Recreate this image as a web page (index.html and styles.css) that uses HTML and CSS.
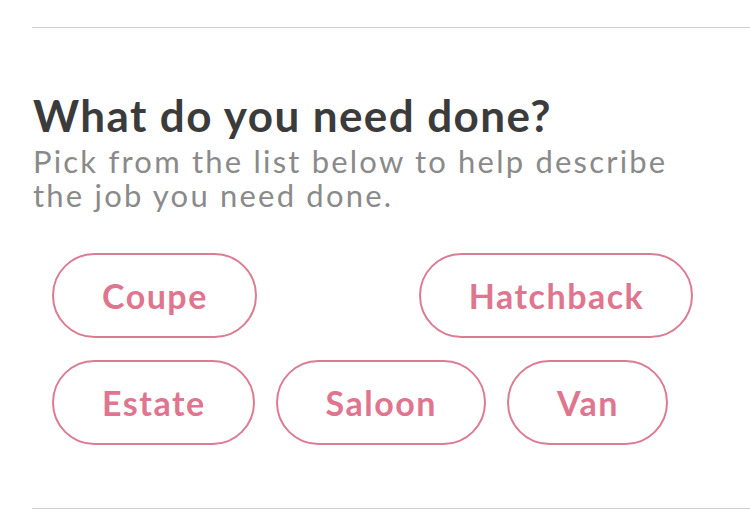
FILE: index.html
```html
<!DOCTYPE html>
<html lang="en">
<head>
  <meta charset="UTF-8" />
  <meta name="viewport" content="width=device-width, initial-scale=1.0" />
  <title>What do you need done?</title>
  <link rel="stylesheet" href="styles.css">
</head>
<body>
  <main class="step">
    <section class="question">
      <h2>What do you need done?</h2>
      <p>Pick from the list below to help describe the job you need done.</p>

      <div class="options">
        <button type="button" class="chip">Coupe</button>
        <span class="chip-spacer" aria-hidden="true"></span>
        <button type="button" class="chip">Hatchback</button>
        <button type="button" class="chip">Estate</button>
        <button type="button" class="chip">Saloon</button>
        <button type="button" class="chip">Van</button>
      </div>
    </section>
  </main>
</body>
</html>
```

FILE: styles.css
```css
body {
  font-family: "Lato", "Open Sans", sans-serif;
  margin: 0;
  padding: 0;
  background-color: white;
  color: #3d3d3d;
}
.step {
  padding: 27px 0 0 32px;
}
.question {
  border-top: 1px solid #cfcfcf;
  border-bottom: 1px solid #cfcfcf;
  padding: 62px 0 63px 1px;
}
.question h2 {
  margin: 0;
  font-size: 44px;
  font-weight: 700;
  line-height: 50px;
  letter-spacing: 1.4px;
  color: #3b3b3b;
}
.question p {
  margin: 4px 0 0;
  max-width: 680px;
  font-size: 31px;
  line-height: 34px;
  letter-spacing: 2.2px;
  color: #8a8a8a;
}
.options {
  display: flex;
  flex-wrap: wrap;
  gap: 22px 21px;
  margin-top: 41px;
  padding-left: 19px;
}
.chip {
  height: 85px;
  padding: 0 47px 0 48px;
  border: 2px solid #dc7c93;
  border-radius: 43px;
  background-color: white;
  color: #e07590;
  font-family: inherit;
  font-size: 34px;
  font-weight: 700;
  letter-spacing: 1.5px;
  cursor: pointer;
}
.chip:hover {
  background-color: #fdf2f5;
}
.chip-spacer {
  width: 120px;
}
```
